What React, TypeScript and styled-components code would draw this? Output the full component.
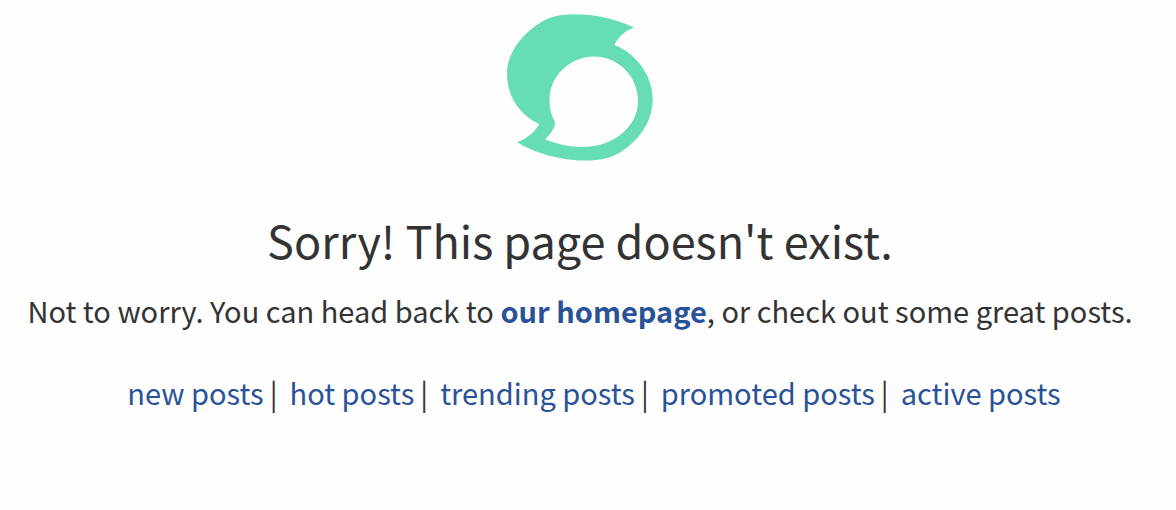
import React from "react";
import styled, { createGlobalStyle } from "styled-components";

const GlobalStyle = createGlobalStyle`
  body {
    margin: 0;
    background: #fefefe;
    color: #333;
    font-family: "Noto Sans CJK SC", "Noto Sans", sans-serif;
  }
`;

const Page = styled.main`
  display: flex;
  flex-direction: column;
  align-items: center;
  padding: 14px 16px 48px 0;
  text-align: center;
`;

const Logo = styled.svg`
  display: block;
  width: 146px;
  height: 147px;
`;

const Title = styled.h1`
  margin: 45px 0 0;
  font-size: 45px;
  line-height: 68px;
  font-weight: 400;
`;

const Message = styled.p`
  margin: 12px 0 0;
  font-size: 29px;
  line-height: 48px;
`;

const Link = styled.a`
  color: #2a5298;
  text-decoration: none;
`;

const HomeLink = styled(Link)`
  font-weight: 600;
`;

const PostLinks = styled.ul`
  display: flex;
  flex-wrap: wrap;
  justify-content: center;
  margin: 34px 0 0;
  padding: 0 0 0 28px;
  list-style: none;
  font-size: 29px;
  line-height: 48px;
`;

const PostItem = styled.li`
  white-space: nowrap;
`;

const Divider = styled.span`
  margin: 0 12px 0 6px;
`;

const posts = ["new posts", "hot posts", "trending posts", "promoted posts", "active posts"];

export default function App() {
  return (
    <>
      <GlobalStyle />
      <Page>
        <Logo viewBox="507 14 146 147" role="img" aria-label="Steem">
          <path
            fill="#66ddb3"
            fillRule="evenodd"
            d="M634 27.500C614 18.500 595 14.300 574 14.300C560 14.500 551 16.500 543 21C521 33.500 507 54 507 73C507 97 520 115 539 124C536 131 527 139 517 142C534 153 561 160.500 585 160.500C600 160.500 610 158.500 620 152.500C641 139.500 652.700 120 652.700 99C652.500 76 637 54 614.500 45C618 37 626 30 634 27.500ZM594 56.500C619 56.500 638 77 638 101C638 127 613 147 583 147C569 147 557 144 545 139.500C551 133.500 555 128 555 122C551 115 549.500 108 549.500 100C549.500 76 570 56.500 594 56.500Z"
          />
        </Logo>
        <Title>Sorry! This page doesn't exist.</Title>
        <Message>
          Not to worry. You can head back to <HomeLink href="#home">our homepage</HomeLink>, or check out some great posts.
        </Message>
        <PostLinks>
          {posts.map((label, i) => (
            <PostItem key={label}>
              <Link href={"#" + label.split(" ")[0]}>{label}</Link>
              {i < posts.length - 1 && <Divider>|</Divider>}
            </PostItem>
          ))}
        </PostLinks>
      </Page>
    </>
  );
}
